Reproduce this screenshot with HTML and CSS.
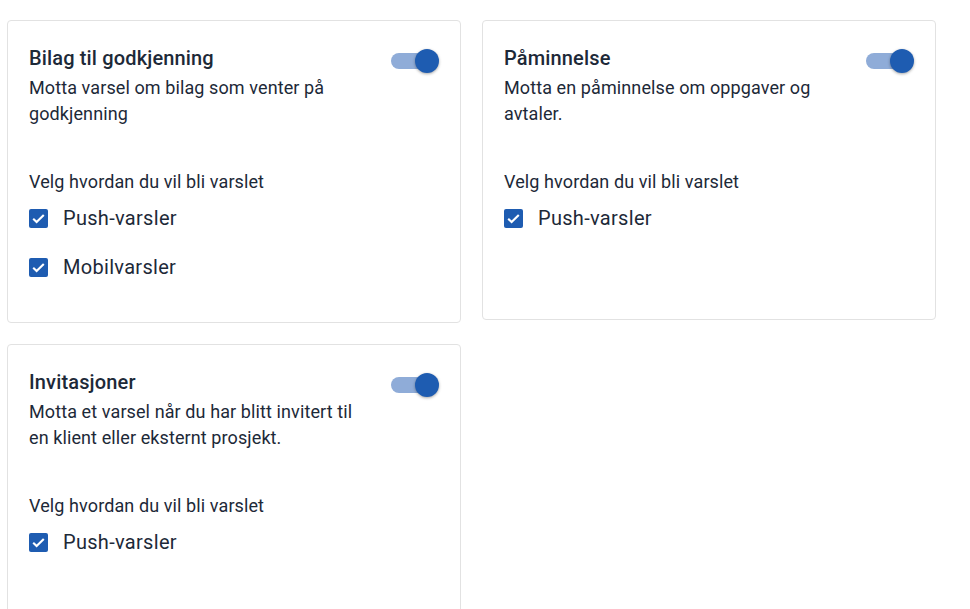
FILE: index.html
```html
<!DOCTYPE html>
<html lang="no">

<head>
    <meta charset="UTF-8">
    <meta name="viewport" content="width=device-width, initial-scale=1.0">
    <title>Varsler</title>
    <link rel="stylesheet" href="styles.css">
</head>

<body>
    <div class="cards">
        <!-- Bilag -->
        <div class="card">
            <div class="card-top">
                <div class="card-text">
                    <h3 class="title">Bilag til godkjenning</h3>
                    <p class="desc">Motta varsel om bilag som venter på godkjenning</p>
                </div>
                <span class="switch"><span class="track"></span><span class="knob"></span></span>
            </div>
            <p class="choose">Velg hvordan du vil bli varslet</p>
            <ul class="options">
                <li class="option">
                    <span class="box"><svg viewBox="0 0 18 18"><path d="M4 9.2l3.2 3.1L14 5.6" /></svg></span>
                    Push-varsler
                </li>
                <li class="option">
                    <span class="box"><svg viewBox="0 0 18 18"><path d="M4 9.2l3.2 3.1L14 5.6" /></svg></span>
                    Mobilvarsler
                </li>
            </ul>
        </div>

        <!-- Påminnelse -->
        <div class="card">
            <div class="card-top">
                <div class="card-text">
                    <h3 class="title">Påminnelse</h3>
                    <p class="desc">Motta en påminnelse om oppgaver og avtaler.</p>
                </div>
                <span class="switch"><span class="track"></span><span class="knob"></span></span>
            </div>
            <p class="choose">Velg hvordan du vil bli varslet</p>
            <ul class="options">
                <li class="option">
                    <span class="box"><svg viewBox="0 0 18 18"><path d="M4 9.2l3.2 3.1L14 5.6" /></svg></span>
                    Push-varsler
                </li>
            </ul>
        </div>

        <!-- Invitasjoner -->
        <div class="card">
            <div class="card-top">
                <div class="card-text">
                    <h3 class="title">Invitasjoner</h3>
                    <p class="desc">Motta et varsel når du har blitt invitert til en klient eller eksternt prosjekt.</p>
                </div>
                <span class="switch"><span class="track"></span><span class="knob"></span></span>
            </div>
            <p class="choose">Velg hvordan du vil bli varslet</p>
            <ul class="options">
                <li class="option">
                    <span class="box"><svg viewBox="0 0 18 18"><path d="M4 9.2l3.2 3.1L14 5.6" /></svg></span>
                    Push-varsler
                </li>
            </ul>
        </div>
    </div>
</body>

</html>
```

FILE: styles.css
```css
* {
    margin: 0;
    padding: 0;
    box-sizing: border-box;
}

body {
    background: #fff;
    font-family: Roboto, "Liberation Sans", sans-serif;
    color: #1d2938;
}

.cards {
    display: grid;
    grid-template-columns: repeat(2, 454px);
    gap: 21px;
    align-items: start;
    padding: 20px 0 0 7px;
}

.card {
    min-height: 300px;
    padding: 24px 21px 37px;
    border: 1px solid #e2e2e2;
    border-radius: 4px;
    background: #fff;
}

.card-top {
    display: flex;
    justify-content: space-between;
}

.card-text {
    max-width: 338px;
}

.title {
    font-size: 20px;
    line-height: 26px;
    font-weight: 500;
    letter-spacing: 0.15px;
}

.desc {
    margin-top: 4px;
    font-size: 18px;
    line-height: 26px;
    letter-spacing: 0.1px;
}

/* switch */
.switch {
    position: relative;
    flex: none;
    width: 48px;
    height: 24px;
    margin-top: 4px;
}

.track {
    position: absolute;
    top: 4px;
    left: 0;
    width: 40px;
    height: 16px;
    border-radius: 8px;
    background: #8facd8;
}

.knob {
    position: absolute;
    top: 0;
    right: 0;
    width: 24px;
    height: 24px;
    border-radius: 50%;
    background: #1e5cb1;
    box-shadow: 0 1px 3px rgba(0, 0, 0, 0.35);
}

.choose {
    margin-top: 43px;
    font-size: 18px;
    line-height: 24px;
    letter-spacing: 0.1px;
}

.options {
    list-style: none;
    margin-top: 6px;
    display: flex;
    flex-direction: column;
    gap: 13px;
}

.option {
    display: flex;
    align-items: center;
    gap: 15px;
    height: 36px;
    font-size: 20px;
    letter-spacing: 0.3px;
}

.box {
    display: flex;
    width: 19px;
    height: 19px;
    border-radius: 2px;
    background: #1e5cb1;
}

.box svg {
    width: 19px;
    height: 19px;
    fill: none;
    stroke: #fff;
    stroke-width: 2;
}
```
